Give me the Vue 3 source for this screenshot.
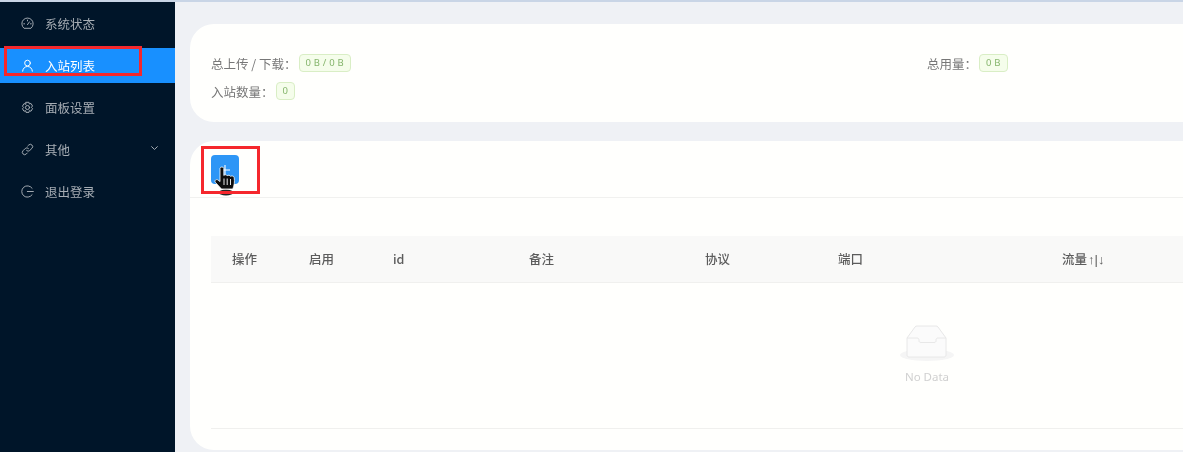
<script setup>
const menu = [
  { label: '系统状态', icon: 'gauge' },
  { label: '入站列表', icon: 'user', active: true },
  { label: '面板设置', icon: 'gear' },
  { label: '其他', icon: 'link', arrow: true },
  { label: '退出登录', icon: 'logout' },
]
const columns = [
  { label: '操作' }, { label: '启用' }, { label: 'id' }, { label: '备注' },
  { label: '协议' }, { label: '端口' }, { label: '流量', sort: '↑|↓' },
]
</script>

<template>
  <div class="page">
    <div class="topline"></div>
    <div class="body">
      <aside class="sider">
        <div v-for="item in menu" :key="item.label" class="menu-item" :class="{ active: item.active }">
          <svg class="micon" viewBox="0 0 16 16" fill="none" stroke="currentColor" stroke-width="1.2" stroke-linecap="round" stroke-linejoin="round">
            <template v-if="item.icon === 'gauge'">
              <path d="M3.4 13.600A7 7 0 1 1 12.600 13.600Z" />
              <path d="M8 9.400 10.400 6" />
              <path d="M3.400 8.400h1M11.600 8.400h1M8 3.800v1" />
            </template>
            <template v-else-if="item.icon === 'user'">
              <circle cx="8" cy="5" r="3.500" />
              <path d="M2 15c.3-3.500 2.800-5.800 6-5.800s5.700 2.300 6 5.800" />
            </template>
            <template v-else-if="item.icon === 'gear'">
              <path d="M6.200.8h3.600l.5 2.100 2-.7 1.900 3.200-1.500 1.600 1.500 1.600-1.900 3.200-2-.7-.5 2.100H6.200l-.5-2.100-2 .7L1.800 8.800l1.500-1.600-1.500-1.600 1.900-3.200 2 .7Z" transform="translate(0 .8)" />
              <circle cx="8" cy="8" r="2.500" />
            </template>
            <template v-else-if="item.icon === 'link'">
              <path d="M6.800 9.200a2.800 2.800 0 0 0 4 0l2.700-2.700a2.800 2.800 0 0 0-4-4L8.300 3.700" />
              <path d="M9.200 6.800a2.800 2.800 0 0 0-4 0l-2.700 2.700a2.800 2.800 0 0 0 4 4l1.200-1.200" />
            </template>
            <template v-else>
              <path d="M13.700 4A7 7 0 1 0 13.700 12" />
              <path d="M7.800 8h7.400" />
            </template>
          </svg>
          <span class="mlabel">{{ item.label }}</span>
          <svg v-if="item.arrow" class="marrow" viewBox="0 0 10 6" fill="none" stroke="currentColor" stroke-width="1.1">
            <path d="M1.500 1.200 5 4.600l3.500-3.400" />
          </svg>
        </div>
      </aside>

      <main class="main">
        <section class="card stats">
          <div class="stats-grid">
            <div class="stat"><span>总上传 / 下载：</span><span class="tag">0 B / 0 B</span></div>
            <div class="stat"><span>总用量：</span><span class="tag">0 B</span></div>
            <div class="stat"><span>入站数量：</span><span class="tag">0</span></div>
          </div>
        </section>

        <section class="card list">
          <div class="list-head">
            <button class="add" type="button">
              <svg viewBox="0 0 12 12" width="12" height="12" fill="none" stroke="#fff" stroke-width="1.100"><path d="M6 1v10M1 6h10" /></svg>
            </button>
          </div>
          <div class="list-body">
            <div class="thead">
              <div v-for="c in columns" :key="c.label" class="th">{{ c.label }}<span v-if="c.sort" class="sort">{{ c.sort }}</span></div>
            </div>
            <div class="empty">
              <svg class="empty-icon" viewBox="0 0 56 38" width="56" height="38">
                <ellipse cx="28" cy="31" rx="27" ry="6" fill="#f5f5f5" />
                <path d="M8 14 16 3c.6-.8 1.200-1 2-1h19c.8 0 1.400.2 2 1l8 11v17c0 1.200-.8 2-2 2H10c-1.200 0-2-.8-2-2Z" fill="#fbfbfb" stroke="#e8e8e8" />
                <path d="M8 14h10c1.300 0 2 .8 2 2v1c0 .8.700 1.500 2 1.500h13c1.300 0 2-.7 2-1.500v-1c0-1.200.7-2 2-2h8" fill="none" stroke="#e8e8e8" />
              </svg>
              <div class="empty-text">No Data</div>
            </div>
            <div class="tfoot-line"></div>
          </div>
        </section>
      </main>
    </div>

    <svg class="hand" viewBox="0 0 24 30" width="24" height="30">
      <ellipse cx="12" cy="26.500" rx="7.500" ry="3" fill="#000" opacity=".85" />
      <path d="M6 2.300C6 .6 9.800 .6 9.800 2.300V9.500c.8-1 3-1 3.400.3.800-.9 3-.8 3.400.6.900-.8 3.400-.4 3.600 1.300.5 3.600.2 7.500-1.400 11.300H7.500L1.300 16.300c-1.100-1.700.9-3.500 2.700-2.300L6 15.600Z" fill="#0d0d0d" stroke="#fff" stroke-width=".8" />
      <path d="M10 12.500v6.500M13.200 12.500v6.500M16.500 13v6" stroke="#fff" stroke-width=".9" />
    </svg>
    <div class="mark mark-menu"></div>
    <div class="mark mark-add"></div>
  </div>
</template>

<style>
html, body { margin: 0; background: #eff1f5; overflow: hidden; }
</style>

<style scoped>
.page {
  position: relative;
  width: 1183px;
  height: 452px;
  overflow: hidden;
  background: #eff1f5;
  font-family: "Noto Sans CJK SC", "Noto Sans", sans-serif;
  font-size: 12.5px;
  color: #666;
  filter: blur(.35px);
}
.topline { height: 2px; background: #c9d5e6; }
.body { display: flex; height: 450px; }
.sider {
  width: 175px;
  flex: none;
  background: #001529;
  padding-top: 4px;
  box-sizing: border-box;
}
.menu-item {
  height: 35px;
  margin-bottom: 7px;
  display: flex;
  align-items: center;
  padding-left: 21px;
  color: #a6adb4;
}
.menu-item.active { background: #1890ff; color: #fff; }
.micon { width: 13px; height: 13px; flex: none; }
.mlabel { margin-left: 11px; }
.marrow { width: 9px; height: 6px; margin-left: auto; margin-right: 16px; margin-top: -3px; }
.main {
  flex: 1;
  min-width: 0;
  padding: 22px 0 0 15px;
  overflow: hidden;
}
.card {
  width: 1474px;
  background: #fffffd;
  border-radius: 24px;
  box-sizing: border-box;
}
.stats { height: 98px; padding: 30px 21px 0; }
.stats-grid { display: grid; grid-template-columns: 716px 716px; row-gap: 10px; }
.stat { display: flex; align-items: center; height: 18px; color: #777; }
.tag {
  height: 18px;
  line-height: 16px;
  box-sizing: border-box;
  margin-left: 2px;
  padding: 0 6px;
  font-size: 9.500px;
  letter-spacing: .2px;
  border: 1px solid #d9eec5;
  border-radius: 4px;
  background: #f5fdeb;
  color: #85b56c;
  font-family: "Noto Sans", sans-serif;
}
.list { height: 309px; margin-top: 19px; }
.list-head {
  height: 57px;
  border-bottom: 1px solid #f1f1ef;
  padding-left: 21px;
  padding-top: 14px;
  box-sizing: border-box;
}
.add {
  width: 28px;
  height: 29px;
  padding: 0;
  border: 0;
  border-radius: 4px;
  background: #2e96f6;
  display: flex;
  align-items: center;
  justify-content: center;
}
.list-body { padding: 38px 21px 0; }
.thead {
  display: grid;
  grid-template-columns: 77px 84px 136px 176px 133px 224px 1fr;
  height: 47px;
  padding-bottom: 1px;
  align-items: center;
  background: #f9f9f8;
  border-bottom: 1px solid #f0f0ee;
  box-sizing: border-box;
  color: #5c5c5c;
}
.th { padding-left: 21px; white-space: nowrap; font-weight: 500; }
.sort { font-size: 13px; font-weight: 400; font-family: "Liberation Sans", sans-serif; margin-left: 1px; }
.empty {
  height: 145px;
  display: flex;
  flex-direction: column;
  align-items: center;
  box-sizing: border-box;
  padding-top: 41px;
}
.empty-icon { display: block; }
.empty-text {
  margin-top: 7px;
  font-size: 11.500px;
  line-height: 16px;
  color: #d0d0d0;
  font-family: "Noto Sans", sans-serif;
}
.tfoot-line { height: 1px; background: #f0f0ee; }
.mark { position: absolute; border: 3px solid #f5272c; box-sizing: border-box; }
.mark-menu { left: 4px; top: 46px; width: 138px; height: 30px; }
.mark-add { left: 201px; top: 146px; width: 59px; height: 48px; }
.hand { position: absolute; left: 214px; top: 166px; }
</style>
